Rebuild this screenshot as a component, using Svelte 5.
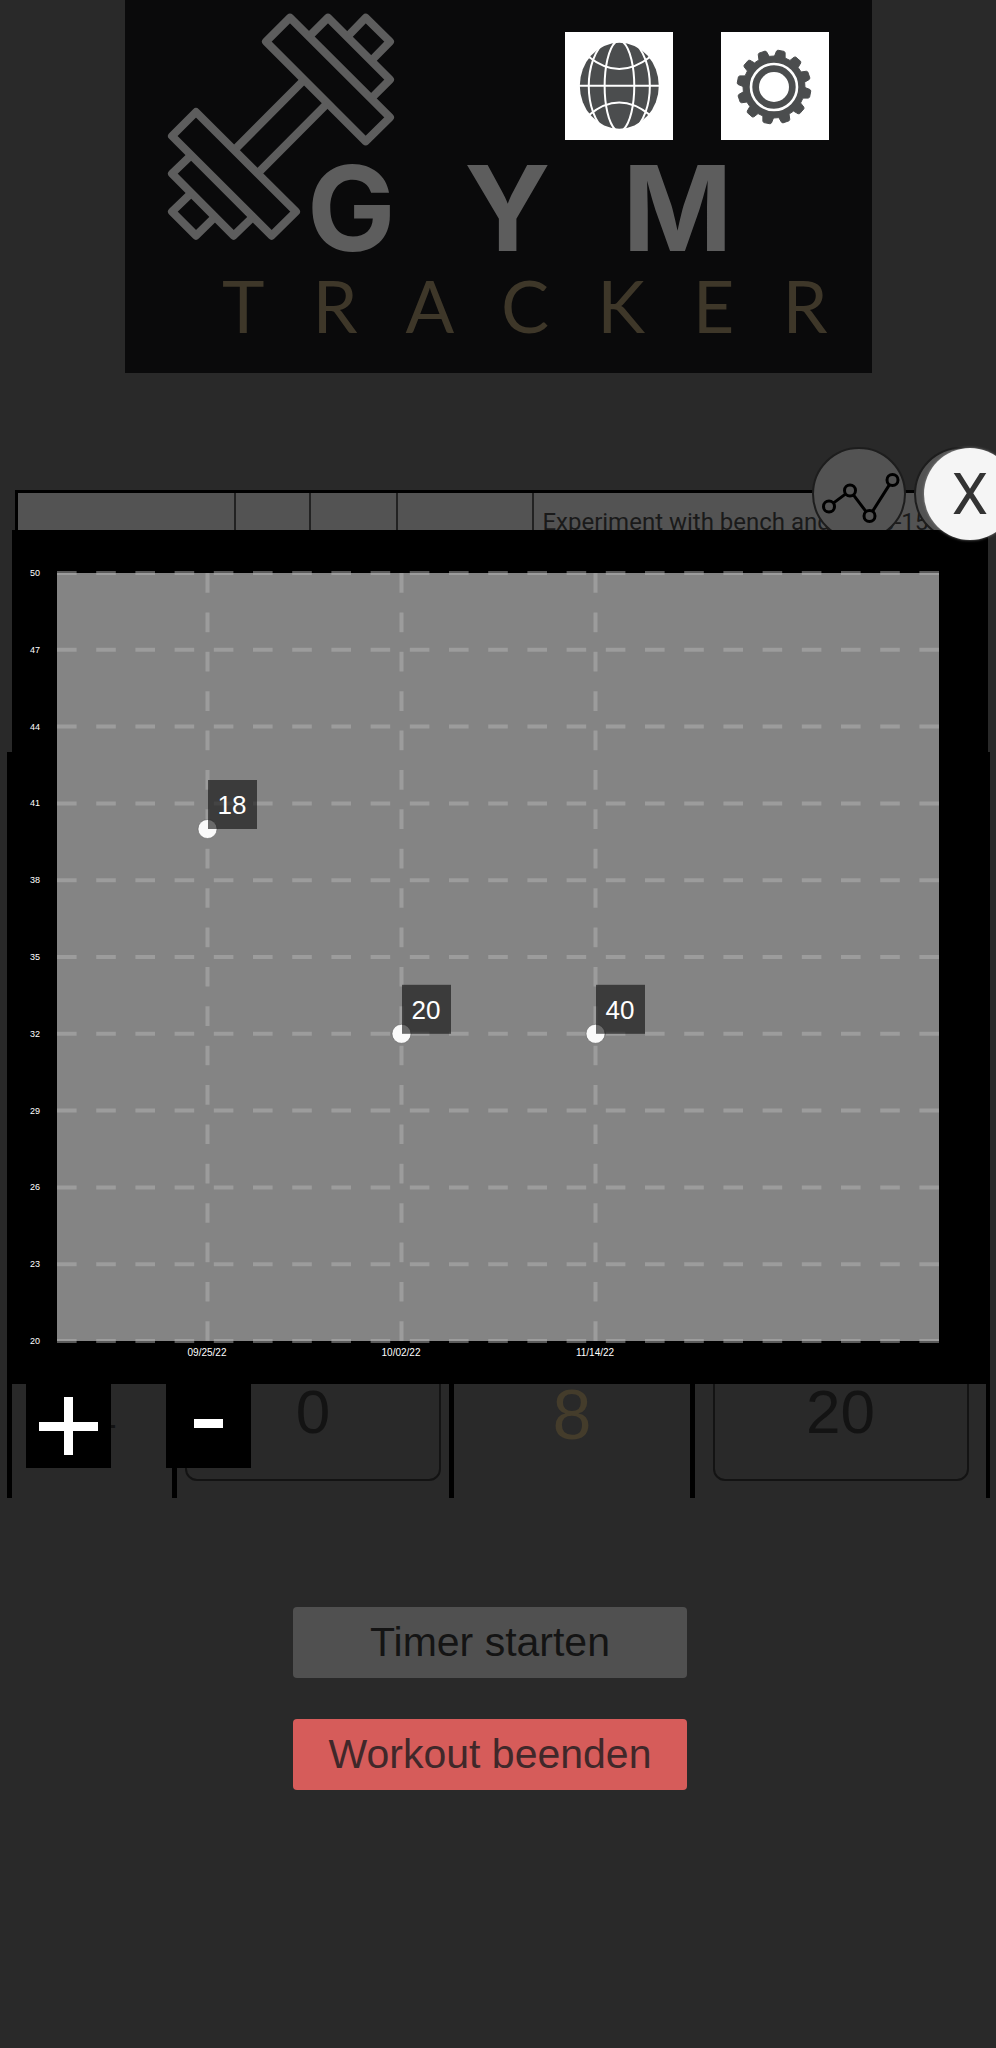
<script>
  const yTicks = [50, 47, 44, 41, 38, 35, 32, 29, 26, 23, 20];
  const plot = { left: 45, top: 43, width: 882, height: 768 };
  const yOf = (v) => plot.top + ((50 - v) / 30) * plot.height;

  const points = [
    { date: '09/25/22', x: 195, value: 40, label: '18' },
    { date: '10/02/22', x: 389, value: 32, label: '20' },
    { date: '11/14/22', x: 583, value: 32, label: '40' }
  ];

  function gearPath(cx, cy, outer, root, teeth, offset) {
    const at = (r, deg) => {
      const a = ((deg - 90) * Math.PI) / 180;
      return `${(cx + r * Math.cos(a)).toFixed(2)},${(cy + r * Math.sin(a)).toFixed(2)}`;
    };
    const out = [];
    for (let i = 0; i < teeth; i++) {
      const c = offset + (i * 360) / teeth;
      out.push(at(root, c - 10), at(outer - 1, c - 7), at(outer, c - 5), at(outer, c + 5), at(outer - 1, c + 7), at(root, c + 10));
    }
    return `M${out.join('L')}Z`;
  }
  const gear = gearPath(53, 55, 37, 31, 12, 11);

  let reps = $state('0');
  let weight = $state('20');
</script>

<div class="page">
  <header>
    <svg class="logo" viewBox="0 0 747 373" role="img" aria-label="Gym Tracker">
      <g class="dumbbell" transform="scale(0.3333) translate(-15 0)">
        <path d="M510 53 438 125 737 424 810 352Z" />
        <path d="M567 110 624 53 810 239 752 297" />
        <path d="M682 110 737 53 810 125 753 183" />
        <path d="M552 240 345 448M622 310 413 520" />
        <path d="M228 336 156 408 455 707 528 635Z" />
        <path d="M213 466 156 521 341 707 400 650" />
        <path d="M213 580 156 635 228 707 286 650" />
      </g>
      <text class="gym" x="182" y="251">GYM</text>
      <text class="tracker" x="97" y="333">TRACKER</text>
    </svg>
    <div class="tools">
      <button aria-label="Sprache">
        <svg viewBox="0 0 108 108">
          <ellipse cx="54.3" cy="53.7" rx="39.5" ry="43" fill="#4b4d4e" />
          <g fill="none" stroke="#fff" stroke-width="2">
            <path d="M41 9C18 26 18 82 41 99M67.6 9C90.6 26 90.6 82 67.6 99" />
            <path d="M50.5 10C36 24 36 84 50.5 98M58.1 10C73 24 73 84 58.1 98" />
            <path d="M14 53.7H95" />
            <path d="M24 25Q37 37 54.3 37T85 25M24 83Q37 70.5 54.3 70.5T85 83" stroke="none" />
            <path d="M24 25Q54 49 85 25M24 83Q54 58 85 83" />
          </g>
        </svg>
      </button>
      <button aria-label="Einstellungen">
        <svg viewBox="0 0 108 108">
          <path d={gear} fill="#4b4d4e" stroke="#4b4d4e" stroke-linejoin="round" />
          <circle cx="53" cy="55" r="23" fill="none" stroke="#fff" stroke-width="2.6" />
          <circle cx="53" cy="55" r="15" fill="#fff" />
        </svg>
      </button>
    </div>
  </header>

  <main>
    <section class="notes">
      <span></span><span></span><span></span><span></span>
      <p>Experiment with bench angles 10-15</p>
    </section>

    <section class="sets">
      <div class="cell number">—</div>
      <div class="cell"><input aria-label="Wiederholungen" bind:value={reps} /></div>
      <div class="cell target">8</div>
      <div class="cell"><input aria-label="Gewicht" bind:value={weight} /></div>
    </section>

    <div class="round-buttons">
      <button class="round" aria-label="Verlauf">
        <svg viewBox="0 0 92 92" fill="none" stroke="#000" stroke-width="3">
          <path d="M19.3 54.1 31.7 44.9M39.4 45.8 52.1 62.7M58.5 62.4 75.5 35.6" />
          <circle cx="15" cy="57.5" r="5.5" />
          <circle cx="36" cy="41.5" r="5.5" />
          <circle cx="55.5" cy="67" r="5.5" />
          <circle cx="78.5" cy="31" r="5.5" />
        </svg>
      </button>
      <button class="round" aria-label="Info"></button>
    </div>

    <div class="chart">
      <svg viewBox="0 0 976 854" role="img" aria-label="Gewichtsverlauf">
        <rect x={plot.left} y={plot.top} width={plot.width} height={plot.height} fill="#848484" />
        {#each yTicks as t}
          <path class="line h" d="M{plot.left} {yOf(t)}h{plot.width}" />
          <text class="tick" x="28" y={yOf(t) + 3} text-anchor="end">{t}</text>
        {/each}
        {#each points as p}
          <path class="line v" d="M{p.x + 0.5} {plot.top + plot.height}v{-plot.height}" />
          <text class="tick date" x={p.x} y="826" text-anchor="middle">{p.date}</text>
        {/each}
        {#each points as p}
          <circle cx={p.x + 0.5} cy={yOf(p.value)} r="9.5" fill="#fafafa" stroke="#555" stroke-opacity="0.5" />
          <rect x={p.x + 1} y={yOf(p.value) - 49} width="49" height="49" fill="#0a0a0a" fill-opacity="0.6" />
          <text class="value" x={p.x + 25} y={yOf(p.value) - 15} text-anchor="middle">{p.label}</text>
        {/each}
      </svg>
    </div>

    <button class="round close" aria-label="Schließen">X</button>

    <div class="steppers">
      <button aria-label="Satz hinzufügen">
        <svg viewBox="0 0 85 85"><path d="M13 39h59v9H13zM38 14h9v58h-9z" fill="#fff" /></svg>
      </button>
      <button aria-label="Satz entfernen">
        <svg viewBox="0 0 85 85"><path d="M28 36h29v9H28z" fill="#fff" /></svg>
      </button>
    </div>
  </main>

  <div class="actions">
    <button>Timer starten</button>
    <button class="end">Workout beenden</button>
  </div>
</div>

<style>
  :global(body) {
    margin: 0;
    background: #292929;
  }
  .page {
    min-height: 100vh;
    overflow: hidden;
    background: #292929;
    font-family: 'Liberation Sans', Arial, sans-serif;
  }
  button {
    display: block;
    margin: 0;
    padding: 0;
    border: 0;
    font-family: inherit;
    cursor: pointer;
  }
  svg {
    display: block;
  }

  header {
    position: relative;
    width: 75%;
    margin: 0 auto;
    background: #0a0a0b;
  }
  .logo {
    width: 100%;
    overflow: visible;
  }
  .dumbbell {
    fill: none;
    stroke: #5d5d5d;
    stroke-width: 24;
    stroke-linejoin: round;
  }
  .gym {
    font: 700 118px Inter, sans-serif;
    letter-spacing: 72px;
    fill: #5d5d5d;
  }
  .tracker {
    font: 400 72px Lato, sans-serif;
    letter-spacing: 48px;
    fill: #3e3729;
  }
  .tools {
    position: absolute;
    top: 32px;
    right: 43px;
    display: flex;
    gap: 48px;
  }
  .tools button {
    width: 108px;
    height: 108px;
    background: #fff;
  }

  main {
    position: relative;
    margin-top: 117px;
  }
  .notes {
    display: grid;
    grid-template-columns: 219fr 75fr 87fr 137fr 450fr;
    box-sizing: border-box;
    height: 262px;
    margin: 0 10px 0 15px;
    border: 3px solid #000;
    background: #535353;
  }
  .notes span {
    border-right: 2px solid #222;
  }
  .notes p {
    margin: 0;
    padding: 15px 8px;
    overflow: hidden;
    white-space: nowrap;
    font: 24px/28px Roboto, sans-serif;
    color: #1a1a1a;
  }

  .sets {
    display: grid;
    grid-template-columns: 165fr 277fr 241fr 296fr;
    height: 746px;
    margin: 0 6px 0 7px;
    border-right: 4px solid #000;
  }
  .cell {
    display: flex;
    align-items: flex-end;
    justify-content: center;
    min-width: 0;
    padding-bottom: 17px;
    border-left: 5px solid #000;
  }
  .cell input {
    box-sizing: border-box;
    width: 256px;
    max-width: 94%;
    height: 140px;
    padding: 0;
    border: 2px solid #131313;
    border-radius: 12px;
    background: transparent;
    text-align: center;
    font: 62px 'Liberation Sans', Arial, sans-serif;
    color: #131313;
  }
  .number {
    font-size: 46px;
    line-height: 118px;
    color: #131313;
  }
  .target {
    font-size: 70px;
    line-height: 132px;
    color: #443c2b;
  }

  .round-buttons {
    position: absolute;
    top: -43px;
    right: -12px;
    display: flex;
    gap: 8px;
  }
  .round {
    box-sizing: border-box;
    width: 94px;
    height: 94px;
    border: 2px solid #1d1d1d;
    border-radius: 50%;
    background: #535353;
  }
  .round svg {
    width: 92px;
    height: 92px;
  }
  .close {
    position: absolute;
    top: -42px;
    right: -20px;
    width: 92px;
    height: 92px;
    border: 0;
    background: #f5f5f5;
    box-shadow: 0 0 3px #888;
    font: 58px Roboto, sans-serif;
    color: #333;
  }

  .chart {
    position: absolute;
    top: 40px;
    left: 12px;
    right: 8px;
    background: #000;
  }
  .line {
    fill: none;
    stroke: #b4b4b4;
    stroke-opacity: 0.5;
    stroke-width: 4;
  }
  .h {
    stroke-dasharray: 19.6;
  }
  .v {
    stroke-dasharray: 19.69;
  }
  .tick {
    font-size: 9px;
    fill: #fff;
  }
  .date {
    font-size: 10px;
  }
  .value {
    font-size: 26px;
    fill: #fff;
  }

  .steppers {
    position: absolute;
    left: 26px;
    bottom: 30px;
    display: flex;
    gap: 55px;
  }
  .steppers button {
    width: 85px;
    height: 85px;
    background: #000;
  }

  .actions {
    display: flex;
    flex-direction: column;
    align-items: center;
    gap: 41px;
    padding: 109px 16px 64px 0;
  }
  .actions button {
    width: 394px;
    height: 71px;
    border-radius: 4px;
    background: #505050;
    font-size: 41px;
    color: #141414;
  }
  .actions .end {
    background: #d65c5a;
    color: #40282a;
  }
</style>
